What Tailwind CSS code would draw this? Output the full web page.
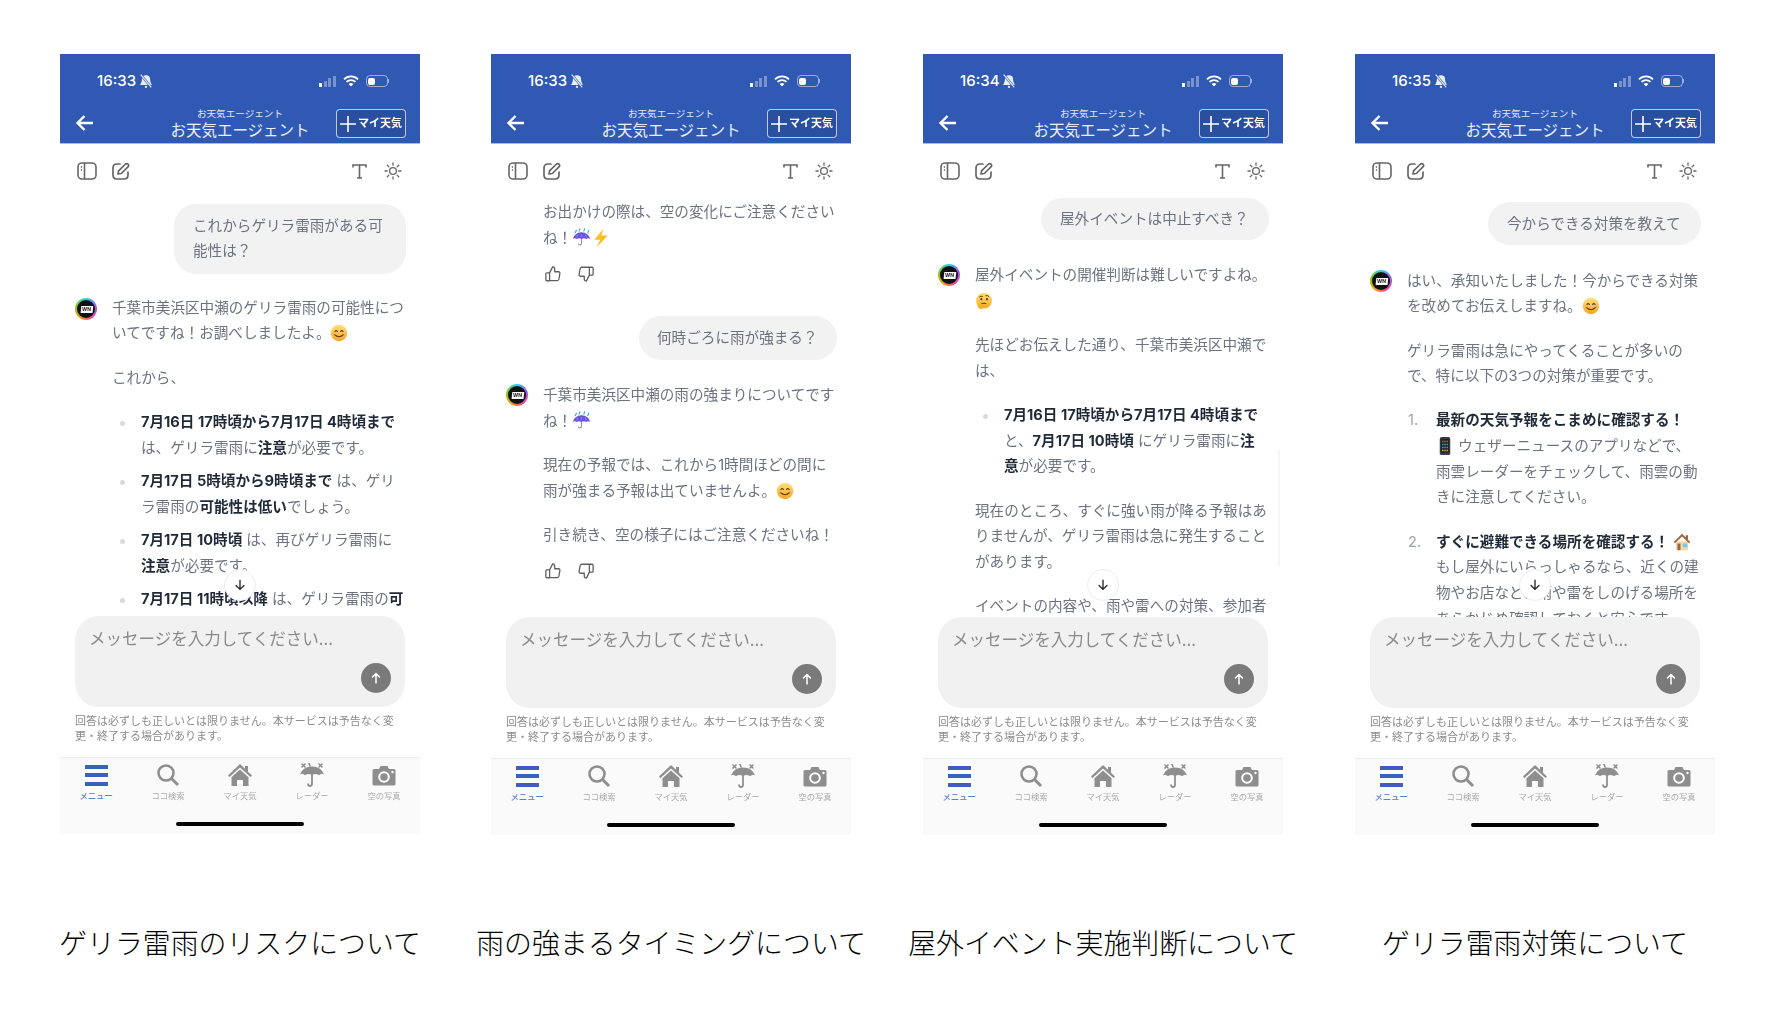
<!DOCTYPE html>
<html lang="ja">
<head>
  <meta charset="UTF-8" />
  <title>お天気エージェント</title>
  <script src="https://cdn.jsdelivr.net/npm/@tailwindcss/browser@4"></script>
</head>
<body class="bg-white min-h-screen font-['Inter','Noto_Sans_CJK_JP',sans-serif]">

  <!-- icons used more than once (not display:none, gradients need it rendered) -->
  <svg class="absolute w-0 h-0">
    <defs>
      <linearGradient id="yellow" x1="0" y1="0" x2="0" y2="1"><stop offset="0" stop-color="#fde27a"/><stop offset="1" stop-color="#f5a623"/></linearGradient>
    </defs>
    <symbol id="smile" viewBox="0 0 24 24">
      <circle cx="12" cy="12" r="11" fill="url(#yellow)"/>
      <path d="M6.5 10q1.7-2.4 3.4 0M14.1 10q1.7-2.4 3.4 0" fill="none" stroke="#5b3a10" stroke-width="1.4" stroke-linecap="round"/>
      <path d="M6 14q6 6 12 0" fill="none" stroke="#5b3a10" stroke-width="1.5" stroke-linecap="round"/>
      <circle cx="5.5" cy="13.5" r="2" fill="#f59a7a" opacity=".5"/><circle cx="18.5" cy="13.5" r="2" fill="#f59a7a" opacity=".5"/>
    </symbol>
    <symbol id="think" viewBox="0 0 24 24">
      <circle cx="12" cy="11.5" r="10.5" fill="url(#yellow)"/>
      <path d="M6 6.5q2-2 4-.7M14.500 4.800q2.500-.8 4 1.200" fill="none" stroke="#5b3a10" stroke-width="1.300" stroke-linecap="round"/>
      <circle cx="8.500" cy="9.500" r="1.400" fill="#5b3a10"/><circle cx="16" cy="9.500" r="1.400" fill="#5b3a10"/>
      <path d="M9 15.500q3-1 5.500-.2" fill="none" stroke="#5b3a10" stroke-width="1.300" stroke-linecap="round"/>
      <path d="M3.500 17q3-1.500 6-.5l3-.5q1 1-.5 1.800l-1 .2q1.500 1.500-.5 3.500-1.500 1.500-4 1-3-1-3-5.500z" fill="#f7b32b"/>
    </symbol>
    <symbol id="umbrella" viewBox="0 0 24 24">
      <path d="M12 6v13q0 2.500-2 2.500t-2-2" fill="none" stroke="#8f8fa8" stroke-width="1.400"/>
      <path d="M1 14Q3 6 12 5.500 21 6 23 14q-2.500-2-5 0-3-2-6 0-3-2-6 0-2.500-2-5 0z" fill="#7b4be0"/>
      <path d="M4 6l1.500-3M9 4l1-3M15 4l1-3M20 6l1-3M6 11l1-2M12 10.500V8.500M18 11l-1-2" stroke="#3fa7f0" stroke-width="1.500" stroke-linecap="round"/>
    </symbol>
    <symbol id="bolt" viewBox="0 0 24 24"><path d="M15 1L4 14h7l-4 9 13-14h-7.500z" fill="#fbbf24"/></symbol>
    <symbol id="iphone" viewBox="0 0 24 24">
      <rect x="5" y="0" width="14" height="24" rx="2.500" fill="#3a3f47"/>
      <rect x="6.500" y="2.500" width="11" height="18.500" fill="#20242a"/>
      <path d="M8 5h2v2H8zM11 5h2v2h-2zM14 5h2v2h-2z" fill="#e5484d"/>
      <path d="M8 9h2v2H8zM14 9h2v2h-2zM11 13h2v2h-2z" fill="#3fa76c"/>
      <path d="M11 9h2v2h-2zM8 13h2v2H8zM14 13h2v2h-2z" fill="#4a90e2"/>
      <path d="M8 17h2v2H8zM11 17h2v2h-2zM14 17h2v2h-2z" fill="#f5a623"/>
    </symbol>
    <symbol id="house" viewBox="0 0 24 24">
      <path d="M4 11h16v12H4z" fill="#f2d9a8"/>
      <path d="M12 1L1 12l1.500 1.500L12 4.500l9.500 9L23 12l-3-3V3h-3v3z" fill="#a5623a"/>
      <path d="M6 14h4v9H6z" fill="#a5623a"/><path d="M13 14h6v5h-6z" fill="#7cc4e8"/>
    </symbol>
    <symbol id="thumbup" viewBox="0 0 24 24">
      <path d="M7.500 10.500l4-8q2.800.3 2.800 3v3.500h5.200q2 .2 1.700 2.300l-1.300 7.700q-.3 1.700-2 1.700H7.500zM7.500 10.500H3.800q-1.300 0-1.300 1.300v7.900q0 1.300 1.300 1.300h3.700" fill="none" stroke="#5f5f5f" stroke-width="1.700" stroke-linejoin="round"/>
    </symbol>
    <symbol id="thumbdown" viewBox="0 0 24 24">
      <path d="M16.500 13.500l-4 8q-2.800-.3-2.800-3V15H4.500q-2-.2-1.700-2.300l1.300-7.700Q4.400 3.300 6.100 3h10.400zM16.500 13.500h3.700q1.300 0 1.300-1.300V4.300q0-1.300-1.300-1.300h-3.700" fill="none" stroke="#5f5f5f" stroke-width="1.700" stroke-linejoin="round"/>
    </symbol>
    <symbol id="down" viewBox="0 0 16 16"><path d="M8 2.500v10.500M3.500 8.500L8 13l4.500-4.500" fill="none" stroke="#222" stroke-width="1.500" stroke-linecap="round" stroke-linejoin="round"/></symbol>
  </svg>

  <!-- shared top of every phone -->
  <template id="phoneTop">
    <div class="bg-[#3059b4] h-[90px] border-b border-[#a9bbe3] text-white">
      <div class="h-[54px] flex items-center justify-between pl-[37px] pr-[31px]">
        <div class="flex items-center gap-[3px] text-[15px] font-medium">
          <span>16:33</span>
          <svg class="w-[14px] h-[14px]" viewBox="0 0 24 24"><path d="M12 2a7 7 0 0 0-7 7c0 6-3 8-3 10h20c0-2-3-4-3-10a7 7 0 0 0-7-7z" fill="#e8edf8"/><circle cx="12" cy="22" r="2" fill="#e8edf8"/><path d="M3 1l18 22" stroke="#3059b4" stroke-width="4"/><path d="M3 1l18 22" stroke="#e8edf8" stroke-width="2"/></svg>
        </div>
        <div class="flex items-center gap-[7px]">
          <div class="flex items-end gap-[1.5px] h-[11px]">
            <span class="w-[3px] h-[4px] bg-white"></span><span class="w-[3px] h-[6px] bg-white/35"></span><span class="w-[3px] h-[9px] bg-white/35"></span><span class="w-[3px] h-[11px] bg-white/35"></span>
          </div>
          <svg class="w-[16px] h-[12px]" viewBox="0 0 16 12"><path d="M1 4.300a10 10 0 0 1 14 0M3.500 6.900a6.500 6.500 0 0 1 9 0" fill="none" stroke="#fff" stroke-width="1.800"/><path d="M5.600 9.100L8 11.500l2.400-2.400a3.400 3.400 0 0 0-4.800 0z" fill="#fff"/></svg>
          <div class="flex items-center">
            <div class="w-[22px] h-[12px] rounded-[4px] border border-white/50 p-[1.500px]"><div class="w-[7px] h-full rounded-[2px] bg-white"></div></div>
            <div class="w-[1.500px] h-[4px] bg-white/50"></div>
          </div>
        </div>
      </div>
      <div class="grid grid-cols-[1fr_auto_1fr]">
        <div class="pl-[15px] pt-[6px]">
          <svg class="w-[20px] h-[18px]" viewBox="0 0 20 18"><path d="M18 9H3M9.500 2L2.500 9l7 7" fill="none" stroke="#fff" stroke-width="2.400"/></svg>
        </div>
        <div class="flex flex-col items-center">
          <span class="text-[9.600px] leading-[12px] text-white/85">お天気エージェント</span>
          <span class="text-[15.500px] leading-[20px] mt-[1px] text-white/90">お天気エージェント</span>
        </div>
        <div class="flex justify-end pr-[14px]">
          <div class="h-[29px] w-[70px] mt-[1px] border border-white/70 rounded-[4px] flex items-center justify-center gap-[2px] bg-[#2b4f9f]">
            <svg class="w-[16px] h-[16px]" viewBox="0 0 14 14"><path d="M7 0v14M0 7h14" stroke="#fff" stroke-width="1.400"/></svg>
            <span class="text-[11px] font-bold">マイ天気</span>
          </div>
        </div>
      </div>
    </div>
    <div class="h-[46px] pt-[8px] flex items-center justify-between pl-[17px] pr-[18px]">
      <div class="flex items-center gap-[15px]">
        <svg class="w-[20px] h-[18px]" viewBox="0 0 20 18"><rect x="1" y="1" width="18" height="16" rx="4" fill="none" stroke="#666" stroke-width="1.600"/><path d="M7.500 1v16" stroke="#666" stroke-width="1.600"/><path d="M3.800 5h1.300M3.800 8h1.300" stroke="#666" stroke-width="1.500"/></svg>
        <svg class="w-[18px] h-[18px]" viewBox="0 0 18 18"><path d="M8 2H5Q1 2 1 6v7q0 4 4 4h7q4 0 4-4v-3" fill="none" stroke="#666" stroke-width="1.700" stroke-linecap="round"/><path d="M6 12l.6-3.200L13.500 2q1.300-1 2.500.2t.2 2.500L9.300 11.500z" fill="none" stroke="#666" stroke-width="1.700" stroke-linejoin="round"/></svg>
      </div>
      <div class="flex items-center gap-[17px]">
        <svg class="w-[15px] h-[15px]" viewBox="0 0 15 15"><path d="M1 3.500V1h13v2.500M7.500 1v13M5 14h5" fill="none" stroke="#666" stroke-width="1.600"/></svg>
        <svg class="w-[18px] h-[18px]" viewBox="0 0 18 18"><circle cx="9" cy="9" r="3.400" fill="none" stroke="#666" stroke-width="1.300"/><path d="M9 1v2.200M9 14.800V17M1 9h2.200M14.800 9H17M3.300 3.300l1.600 1.600M13.100 13.100l1.600 1.600M3.300 14.700l1.600-1.600M13.100 4.900l1.600-1.600" stroke="#666" stroke-width="1.300" stroke-linecap="round"/></svg>
      </div>
    </div>
  </template>

  <!-- shared bottom of every phone -->
  <template id="phoneBottom">
    <div class="mx-[15px] h-[91px] rounded-[24px] bg-[#f1f1f1] flex flex-col justify-between pl-[14px] pr-[14px] pt-[12px] pb-[14px]">
      <div class="text-[16.500px] leading-[22px] text-[#8a8a8a] whitespace-nowrap">メッセージを入力してください...</div>
      <div class="self-end w-[30px] h-[30px] rounded-full bg-[#7a7a7a] flex items-center justify-center">
        <svg class="w-[12px] h-[12px]" viewBox="0 0 12 12"><path d="M6 11V1.500M2.500 5L6 1.500 9.500 5" fill="none" stroke="#fff" stroke-width="1.500" stroke-linecap="round" stroke-linejoin="round"/></svg>
      </div>
    </div>
    <div class="mx-[15px] mt-[7px] text-[11px] leading-[15px] text-[#8b8b8b] whitespace-nowrap">回答は必ずしも正しいとは限りません。本サービスは予告なく変<br>更・終了する場合があります。</div>
    <div class="mt-[13px] h-[77px] bg-[#fafafa] border-t border-[#ececec] relative">
      <div class="grid grid-cols-5 pt-[5px]">
        <div class="flex flex-col items-center">
          <div class="h-[24px] flex flex-col justify-center gap-[4.500px]"><div class="w-[23px] h-[4px] bg-[#3a62bd]"></div><div class="w-[23px] h-[4px] bg-[#3a62bd]"></div><div class="w-[23px] h-[4px] bg-[#3a62bd]"></div></div>
          <span class="mt-[4px] text-[8.300px] leading-[11px] font-medium text-[#5b7fd0]">メニュー</span>
        </div>
        <div class="flex flex-col items-center">
          <svg class="w-[24px] h-[24px]" viewBox="0 0 24 24"><circle cx="10" cy="10" r="7.500" fill="none" stroke="#8e8e8e" stroke-width="2.600"/><path d="M15.500 15.500l6.500 6.500" stroke="#8e8e8e" stroke-width="3"/></svg>
          <span class="mt-[4px] text-[8.300px] leading-[11px] text-[#ababab]">ココ検索</span>
        </div>
        <div class="flex flex-col items-center">
          <svg class="w-[24px] h-[24px]" viewBox="0 0 24 24"><path d="M12 1L0 12.500l1.500 1.500L12 4.500 22.500 14l1.500-1.500-4-3.800V3h-3v2.800z" fill="#8e8e8e"/><path d="M12 6.500L3.500 14.300V23H9v-6h6v6h5.500v-8.700z" fill="#8e8e8e"/></svg>
          <span class="mt-[4px] text-[8.300px] leading-[11px] text-[#ababab]">マイ天気</span>
        </div>
        <div class="flex flex-col items-center">
          <svg class="w-[24px] h-[24px]" viewBox="0 0 24 24"><path d="M12 6v14.500q0 2.500-2 2.500t-2-2.500" fill="none" stroke="#8e8e8e" stroke-width="1.800"/><path d="M0 11.500Q3 3.500 12 3.500t12 8q-2.500-2-5 .8-3.500-2.800-7 0-3.500-2.800-7 0-2.500-2.800-5-.8z" fill="#8e8e8e"/><path d="M2 1l3 3M5 1L2 4M19 1l3 3M22 1l-3 3M9 0l1 3" stroke="#8e8e8e" stroke-width="1.600" stroke-linecap="round"/></svg>
          <span class="mt-[4px] text-[8.300px] leading-[11px] text-[#ababab]">レーダー</span>
        </div>
        <div class="flex flex-col items-center">
          <svg class="w-[24px] h-[24px]" viewBox="0 0 24 24"><path d="M2 6h5l1.500-3h7L17 6h5q1.500 0 1.500 1.500V21q0 1.500-1.500 1.500H2Q.5 22.500.5 21V7.500Q.5 6 2 6z" fill="#8e8e8e"/><circle cx="12" cy="14" r="5.800" fill="#fff"/><circle cx="12" cy="14" r="3.800" fill="#8e8e8e"/><circle cx="20.500" cy="9" r="1.200" fill="#fff"/></svg>
          <span class="mt-[4px] text-[8.300px] leading-[11px] text-[#ababab]">空の写真</span>
        </div>
      </div>
      <div class="absolute left-[116px] bottom-[8px] w-[128px] h-[4px] rounded-full bg-black"></div>
    </div>
  </template>

  <template id="avatar">
    <div class="w-[22px] h-[22px] rounded-full p-[2px] bg-[conic-gradient(#22d3ee,#a855f7,#ec4899,#f59e0b,#84cc16,#22d3ee)]">
      <div class="w-full h-full rounded-full bg-[#111] flex items-center justify-center">
        <span class="bg-white text-[#111] text-[5px] leading-[6px] font-bold px-[1px] -skew-x-6">WN</span>
      </div>
    </div>
  </template>

  <template id="scrollButton">
    <div class="absolute left-[164px] top-[379px] w-[32px] h-[32px] rounded-full bg-white border border-[#ececec] flex items-center justify-center">
      <svg class="w-[14px] h-[14px]"><use href="#down"/></svg>
    </div>
  </template>

  <main class="flex gap-[71px] pl-[60px] pt-[54px]">

    <!-- 1 -->
    <section class="w-[360px] shrink-0">
      <div data-phone class="blur-[0.4px]">
        <div class="relative h-[426px] overflow-hidden pt-[14px] text-[14.600px] leading-[25.800px] text-[#6b7280] whitespace-nowrap">
          <div class="ml-[114px] w-[232px] rounded-[22px] bg-[#f2f2f2] pl-[19px] pt-[9.500px] pb-[8.500px]">これからゲリラ雷雨がある可<br>能性は？</div>
          <div class="mt-[22px] flex">
            <div data-avatar class="ml-[15px] mr-[15px] mt-[2px] w-[22px] shrink-0"></div>
            <div>
              <p>千葉市美浜区中瀬のゲリラ雷雨の可能性につ<br>いてですね！お調べしましたよ。<svg class="inline-block w-[18px] h-[18px] align-[-4px]"><use href="#smile"/></svg></p>
              <p class="mt-[18.400px]">これから、</p>
              <ul class="mt-[18.400px] space-y-[7.600px]">
                <li class="flex"><span class="w-[29px] shrink-0 pl-[8px] pt-[11px]"><span class="block w-[5px] h-[5px] rounded-full bg-[#d7dae0]"></span></span><span><b class="text-[#1f2937]">7月16日 17時頃から7月17日 4時頃まで</b><br>は、ゲリラ雷雨に<b class="text-[#1f2937]">注意</b>が必要です。</span></li>
                <li class="flex"><span class="w-[29px] shrink-0 pl-[8px] pt-[11px]"><span class="block w-[5px] h-[5px] rounded-full bg-[#d7dae0]"></span></span><span><b class="text-[#1f2937]">7月17日 5時頃から9時頃まで</b> は、ゲリ<br>ラ雷雨の<b class="text-[#1f2937]">可能性は低い</b>でしょう。</span></li>
                <li class="flex"><span class="w-[29px] shrink-0 pl-[8px] pt-[11px]"><span class="block w-[5px] h-[5px] rounded-full bg-[#d7dae0]"></span></span><span><b class="text-[#1f2937]">7月17日 10時頃</b> は、再びゲリラ雷雨に<br><b class="text-[#1f2937]">注意</b>が必要です。</span></li>
                <li class="flex"><span class="w-[29px] shrink-0 pl-[8px] pt-[11px]"><span class="block w-[5px] h-[5px] rounded-full bg-[#d7dae0]"></span></span><span><b class="text-[#1f2937]">7月17日 11時頃以降</b> は、ゲリラ雷雨の<b class="text-[#1f2937]">可</b></span></li>
              </ul>
            </div>
          </div>
          <div data-scroll></div>
        </div>
      </div>
      <h2 class="mt-[93px] flex justify-center whitespace-nowrap text-[27.900px] leading-[34px] font-light text-black">ゲリラ雷雨のリスクについて</h2>
    </section>

    <!-- 2 -->
    <section class="w-[360px] shrink-0">
      <div data-phone class="blur-[0.4px]">
        <div class="relative h-[427px] overflow-hidden pt-[10px] text-[14.600px] leading-[25.700px] text-[#6b7280] whitespace-nowrap">
          <div class="pl-[52px]">
            <p>お出かけの際は、空の変化にご注意ください<br>ね！<svg class="inline-block w-[19px] h-[19px] align-[-4px]"><use href="#umbrella"/></svg><svg class="inline-block w-[20px] h-[20px] align-[-5px]"><use href="#bolt"/></svg></p>
            <div class="mt-[14px] ml-[1px] flex gap-[15px]"><svg class="w-[18px] h-[18px]"><use href="#thumbup"/></svg><svg class="w-[18px] h-[18px]"><use href="#thumbdown"/></svg></div>
          </div>
          <div class="mt-[33px] ml-[148px] w-[198px] rounded-[22px] bg-[#f2f2f2] pl-[18px] pt-[10px] pb-[8px]">何時ごろに雨が強まる？</div>
          <div class="mt-[23px] flex">
            <div data-avatar class="ml-[15px] mr-[15px] mt-[1px] w-[22px] shrink-0"></div>
            <div>
              <p>千葉市美浜区中瀬の雨の強まりについてです<br>ね！<svg class="inline-block w-[19px] h-[19px] align-[-4px]"><use href="#umbrella"/></svg></p>
              <p class="mt-[18.400px]">現在の予報では、これから1時間ほどの間に<br>雨が強まる予報は出ていませんよ。<svg class="inline-block w-[18px] h-[18px] align-[-4px]"><use href="#smile"/></svg></p>
              <p class="mt-[18.400px]">引き続き、空の様子にはご注意くださいね！</p>
              <div class="mt-[14px] ml-[1px] flex gap-[15px]"><svg class="w-[18px] h-[18px]"><use href="#thumbup"/></svg><svg class="w-[18px] h-[18px]"><use href="#thumbdown"/></svg></div>
            </div>
          </div>
        </div>
      </div>
      <h2 class="mt-[92px] flex justify-center whitespace-nowrap text-[27.900px] leading-[34px] font-light text-black">雨の強まるタイミングについて</h2>
    </section>

    <!-- 3 -->
    <section class="w-[360px] shrink-0 ml-[1px]">
      <div data-phone data-time="16:34" class="blur-[0.4px]">
        <div class="relative h-[427px] overflow-hidden pt-[8px] text-[14.600px] leading-[25.800px] text-[#6b7280] whitespace-nowrap">
          <div class="ml-[118px] w-[228px] rounded-[21px] bg-[#f2f2f2] pl-[19px] pt-[9px] pb-[7px]">屋外イベントは中止すべき？</div>
          <div class="mt-[23px] flex">
            <div data-avatar class="ml-[15px] mr-[15px] mt-[1px] w-[22px] shrink-0"></div>
            <div>
              <p>屋外イベントの開催判断は難しいですよね。<br><svg class="inline-block w-[18px] h-[18px] align-[-4px]"><use href="#think"/></svg></p>
              <p class="mt-[18.400px]">先ほどお伝えした通り、千葉市美浜区中瀬で<br>は、</p>
              <ul class="mt-[18.400px]">
                <li class="flex"><span class="w-[29px] shrink-0 pl-[8px] pt-[11px]"><span class="block w-[5px] h-[5px] rounded-full bg-[#d7dae0]"></span></span><span><b class="text-[#1f2937]">7月16日 17時頃から7月17日 4時頃まで</b><br>と、<b class="text-[#1f2937]">7月17日 10時頃</b> にゲリラ雷雨に<b class="text-[#1f2937]">注</b><br><b class="text-[#1f2937]">意</b>が必要です。</span></li>
              </ul>
              <p class="mt-[18.400px]">現在のところ、すぐに強い雨が降る予報はあ<br>りませんが、ゲリラ雷雨は急に発生すること<br>があります。</p>
              <p class="mt-[18.400px]">イベントの内容や、雨や雷への対策、参加者</p>
            </div>
          </div>
          <div class="absolute left-[355px] top-[260px] w-[2px] h-[116px] rounded-full bg-[#f7f7f7]"></div>
          <div data-scroll></div>
        </div>
      </div>
      <h2 class="mt-[92px] flex justify-center whitespace-nowrap text-[27.900px] leading-[34px] font-light text-black">屋外イベント実施判断について</h2>
    </section>

    <!-- 4 -->
    <section class="w-[360px] shrink-0 ml-[1px]">
      <div data-phone data-time="16:35" class="blur-[0.4px]">
        <div class="relative h-[427px] overflow-hidden pt-[12px] text-[14.600px] leading-[25.700px] text-[#6b7280] whitespace-nowrap">
          <div class="ml-[133px] w-[213px] rounded-[22px] bg-[#f2f2f2] pl-[19px] pt-[10px] pb-[7px]">今からできる対策を教えて</div>
          <div class="mt-[24px] flex">
            <div data-avatar class="ml-[15px] mr-[15px] mt-[1px] w-[22px] shrink-0"></div>
            <div>
              <p>はい、承知いたしました！今からできる対策<br>を改めてお伝えしますね。<svg class="inline-block w-[18px] h-[18px] align-[-4px]"><use href="#smile"/></svg></p>
              <p class="mt-[18.400px]">ゲリラ雷雨は急にやってくることが多いの<br>で、特に以下の3つの対策が重要です。</p>
              <ol class="mt-[18.400px] space-y-[18.400px]">
                <li class="flex"><span class="w-[29px] shrink-0 pl-[1px] text-[#9ca3af]">1.</span><span><b class="text-[#1f2937]">最新の天気予報をこまめに確認する！</b><br><svg class="inline-block w-[18px] h-[18px] align-[-4px]"><use href="#iphone"/></svg> ウェザーニュースのアプリなどで、<br>雨雲レーダーをチェックして、雨雲の動<br>きに注意してください。</span></li>
                <li class="flex"><span class="w-[29px] shrink-0 pl-[1px] text-[#9ca3af]">2.</span><span><b class="text-[#1f2937]">すぐに避難できる場所を確認する！</b> <svg class="inline-block w-[18px] h-[18px] align-[-4px]"><use href="#house"/></svg><br>もし屋外にいらっしゃるなら、近くの建<br>物やお店など、雨や雷をしのげる場所を<br>あらかじめ確認しておくと安心です。</span></li>
              </ol>
            </div>
          </div>
          <div data-scroll></div>
        </div>
      </div>
      <h2 class="mt-[92px] flex justify-center whitespace-nowrap text-[27.900px] leading-[34px] font-light text-black">ゲリラ雷雨対策について</h2>
    </section>
  </main>

  <script>
    // stamp the repeated phone chrome around each chat
    const tpl = id => document.getElementById(id).content.cloneNode(true);

    document.querySelectorAll('[data-phone]').forEach(phone => {
      phone.prepend(tpl('phoneTop'));
      phone.append(tpl('phoneBottom'));
      if (phone.dataset.time) phone.querySelector('span').textContent = phone.dataset.time;
    });
    document.querySelectorAll('[data-avatar]').forEach(el => el.append(tpl('avatar')));
    document.querySelectorAll('[data-scroll]').forEach(el => el.append(tpl('scrollButton')));
  </script>
</body>
</html>
